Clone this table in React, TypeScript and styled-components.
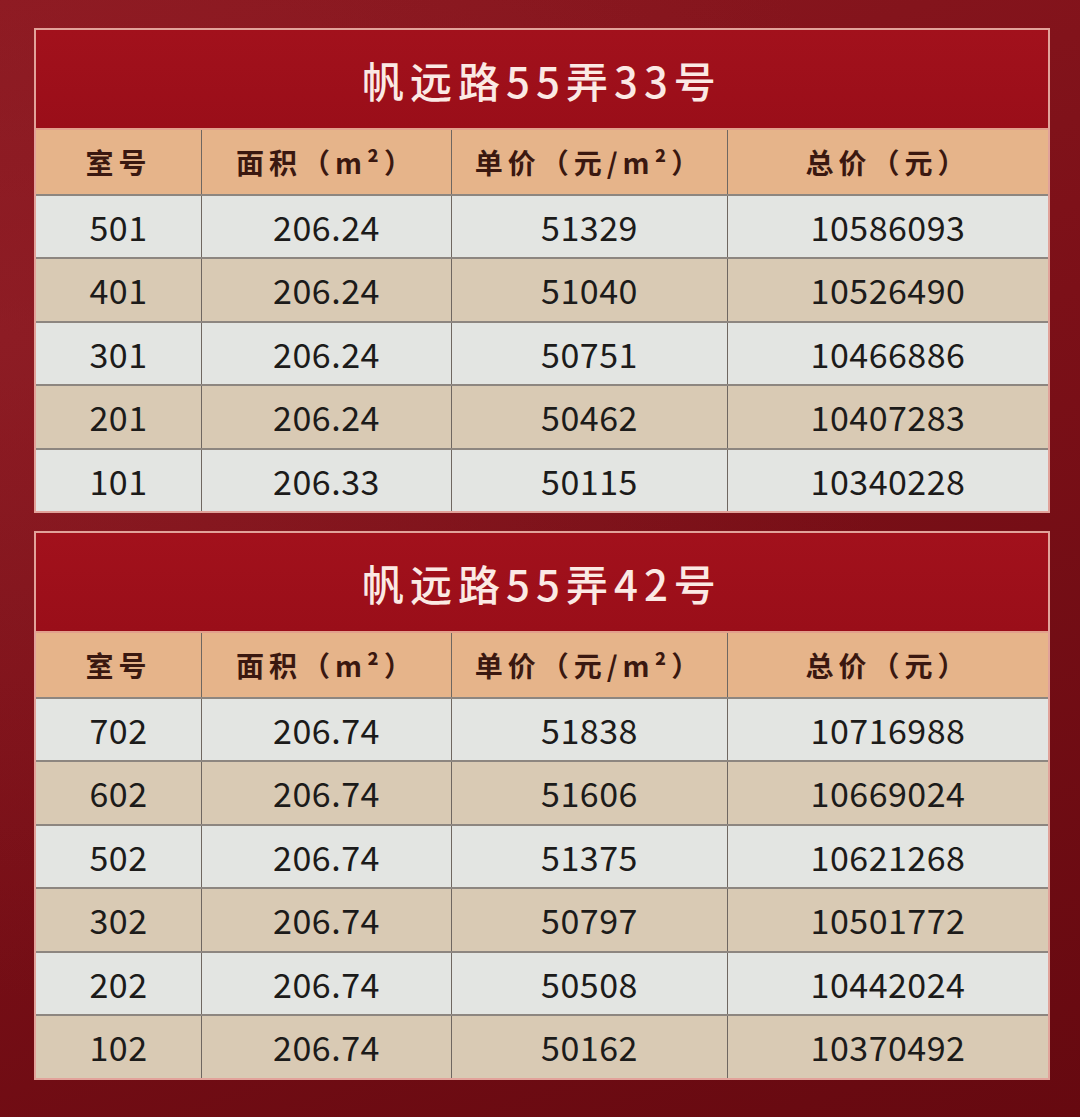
import React from 'react';
import styled, { createGlobalStyle } from 'styled-components';

const GlobalStyle = createGlobalStyle`
  html, body {
    margin: 0;
    padding: 0;
  }
  body {
    font-family: "Noto Sans CJK SC", "Noto Sans", sans-serif;
    background: #7e1017;
  }
`;

const Page = styled.main`
  width: 1080px;
  height: 1117px;
  box-sizing: border-box;
  padding: 28px 30px 0 34px;
  display: flex;
  flex-direction: column;
  gap: 18px;
  background:
    radial-gradient(ellipse at 0% 30%, rgba(150, 36, 44, 0.5), transparent 60%),
    linear-gradient(160deg, #8c1820 0%, #7c1018 45%, #660910 100%);
  overflow: hidden;
`;

const Table = styled.section`
  width: 1016px;
  display: flex;
  flex-direction: column;
  border: 2px solid #e2a29a;
  box-sizing: border-box;
`;

const Title = styled.h2`
  margin: 0;
  height: 98px;
  display: flex;
  align-items: center;
  justify-content: center;
  background: linear-gradient(180deg, #a2111c 0%, #9a0e19 100%);
  color: #fbe9e4;
  font-size: 42px;
  font-weight: 500;
  letter-spacing: 6px;
  border-bottom: 2px solid #e2a08c;
`;

const Row = styled.div<{ $tone: 'head' | 'light' | 'beige' }>`
  display: grid;
  grid-template-columns: 165px 250px 276px 1fr;
  height: 63.5px;
  box-sizing: border-box;
  background: ${({ $tone }) =>
    $tone === 'head' ? '#e6b48a' : $tone === 'light' ? '#e3e5e2' : '#d9cab4'};
  border-top: ${({ $tone }) => ($tone === 'head' ? 'none' : '2px solid #8d8680')};
  color: ${({ $tone }) => ($tone === 'head' ? '#3a1810' : '#1c1b1a')};
  font-size: ${({ $tone }) => ($tone === 'head' ? '28px' : '34px')};
  font-weight: ${({ $tone }) => ($tone === 'head' ? 700 : 400)};
  letter-spacing: ${({ $tone }) => ($tone === 'head' ? '5px' : '0.5px')};
`;

const Cell = styled.div`
  display: flex;
  align-items: center;
  justify-content: center;
  border-left: 1px solid #6f6761;
  &:first-child {
    border-left: none;
  }
`;

type Unit = [string, string, string, string];

const tables: { title: string; rows: Unit[] }[] = [
  {
    title: '帆远路55弄33号',
    rows: [
      ['501', '206.24', '51329', '10586093'],
      ['401', '206.24', '51040', '10526490'],
      ['301', '206.24', '50751', '10466886'],
      ['201', '206.24', '50462', '10407283'],
      ['101', '206.33', '50115', '10340228'],
    ],
  },
  {
    title: '帆远路55弄42号',
    rows: [
      ['702', '206.74', '51838', '10716988'],
      ['602', '206.74', '51606', '10669024'],
      ['502', '206.74', '51375', '10621268'],
      ['302', '206.74', '50797', '10501772'],
      ['202', '206.74', '50508', '10442024'],
      ['102', '206.74', '50162', '10370492'],
    ],
  },
];

function PriceTable({ title, rows }: { title: string; rows: Unit[] }) {
  return (
    <Table>
      <Title>{title}</Title>
      <Row $tone="head">
        <Cell>室号</Cell>
        <Cell>面积（m²）</Cell>
        <Cell>单价（元/m²）</Cell>
        <Cell>总价（元）</Cell>
      </Row>
      {rows.map((r, i) => (
        <Row key={r[0]} $tone={i % 2 === 0 ? 'light' : 'beige'}>
          {r.map((v, j) => (
            <Cell key={j}>{v}</Cell>
          ))}
        </Row>
      ))}
    </Table>
  );
}

export default function App() {
  return (
    <>
      <GlobalStyle />
      <Page>
        {tables.map((t) => (
          <PriceTable key={t.title} title={t.title} rows={t.rows} />
        ))}
      </Page>
    </>
  );
}
